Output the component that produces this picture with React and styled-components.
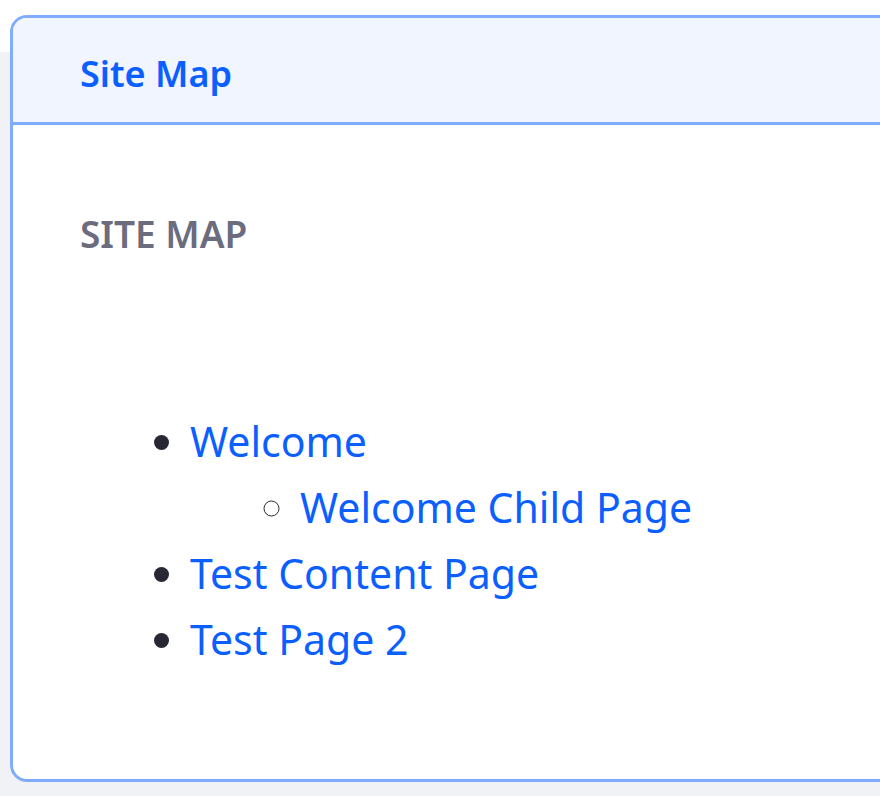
import React from "react";
import styled, { createGlobalStyle } from "styled-components";

const Global = createGlobalStyle`
  html, body {
    margin: 0;
    padding: 0;
    overflow: hidden;
  }
  body {
    background: #f1f2f5;
    font-family: "Noto Sans", "Open Sans", sans-serif;
    color: #272833;
  }
`;

const Page = styled.div`
  min-height: 796px;
  background: linear-gradient(#ffffff 0, #ffffff 52px, #f1f2f5 52px);
  padding: 15px 0 0 10px;
  box-sizing: border-box;
`;

const Card = styled.section`
  width: 920px;
  border: 3px solid #80acff;
  border-radius: 17px;
  background: #ffffff;
  overflow: hidden;
`;

const CardHeader = styled.header`
  background: #f0f5ff;
  border-bottom: 3px solid #80acff;
  padding: 34px 67px 27px;
`;

const HeaderTitle = styled.h2`
  margin: 0;
  font-size: 36px;
  line-height: 43px;
  font-weight: 600;
  color: #0b5fff;
`;

const CardBody = styled.div`
  padding: 87px 67px 107px;
`;

const SectionTitle = styled.h3`
  margin: 0 0 153px;
  font-size: 37px;
  line-height: 43px;
  font-weight: 600;
  color: #6b6c7e;
  text-transform: uppercase;
`;

const List = styled.ul`
  margin: 0;
  padding-left: 110px;
  list-style: ${(p) => (p.$nested ? "circle" : "disc")};
  font-size: 41px;
  line-height: 66px;
`;

const Item = styled.li`
  color: #272833;
`;

const Link = styled.a`
  color: #0b5fff;
  text-decoration: none;
`;

const pages = [
  { name: "Welcome", children: [{ name: "Welcome Child Page" }] },
  { name: "Test Content Page" },
  { name: "Test Page 2" },
];

function Tree({ items, nested }) {
  return (
    <List $nested={nested}>
      {items.map((p) => (
        <Item key={p.name}>
          <Link href="#">{p.name}</Link>
          {p.children && <Tree items={p.children} nested />}
        </Item>
      ))}
    </List>
  );
}

export default function App() {
  return (
    <>
      <Global />
      <Page>
        <Card>
          <CardHeader>
            <HeaderTitle>Site Map</HeaderTitle>
          </CardHeader>
          <CardBody>
            <SectionTitle>Site Map</SectionTitle>
            <Tree items={pages} />
          </CardBody>
        </Card>
      </Page>
    </>
  );
}
